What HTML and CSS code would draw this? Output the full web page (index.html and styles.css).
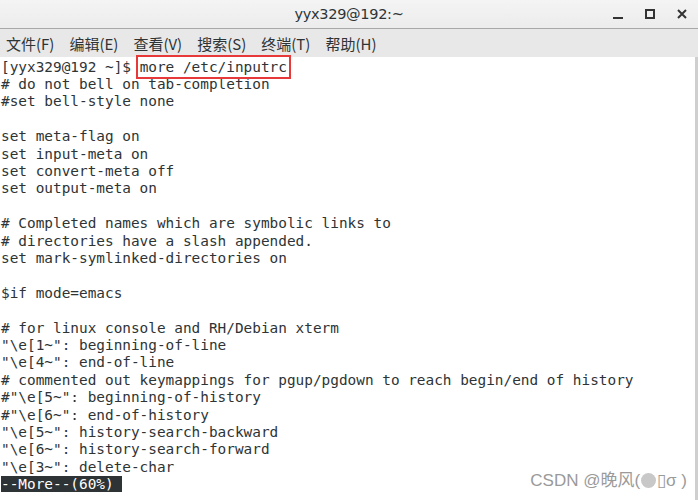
FILE: index.html
```html
<!DOCTYPE html>
<html lang="zh-CN">
<head>
    <meta charset="UTF-8">
    <title>yyx329@192:~</title>
    <link rel="stylesheet" href="styles.css">
</head>
<body>
    <div class="window">
        <div class="titlebar">
            <span class="title">yyx329@192:~</span>
            <div class="controls">
                <svg width="12" height="12" viewBox="0 0 12 12"><rect x="1" y="9" width="10" height="2" fill="#333"/></svg>
                <svg width="12" height="12" viewBox="0 0 12 12"><rect x="2" y="2" width="8" height="8" fill="none" stroke="#333" stroke-width="2"/></svg>
                <svg width="12" height="12" viewBox="0 0 12 12"><path d="M2 2 L10 10 M10 2 L2 10" stroke="#333" stroke-width="2"/></svg>
            </div>
        </div>
        <div class="menubar">
            <span>文件(F)</span>
            <span>编辑(E)</span>
            <span>查看(V)</span>
            <span>搜索(S)</span>
            <span>终端(T)</span>
            <span>帮助(H)</span>
        </div>
        <div class="terminal">
<pre class="output">[yyx329@192 ~]$ <span class="cmd">more /etc/inputrc</span>
# do not bell on tab-completion
#set bell-style none

set meta-flag on
set input-meta on
set convert-meta off
set output-meta on

# Completed names which are symbolic links to
# directories have a slash appended.
set mark-symlinked-directories on

$if mode=emacs

# for linux console and RH/Debian xterm
"\e[1~": beginning-of-line
"\e[4~": end-of-line
# commented out keymappings for pgup/pgdown to reach begin/end of history
#"\e[5~": beginning-of-history
#"\e[6~": end-of-history
"\e[5~": history-search-backward
"\e[6~": history-search-forward
"\e[3~": delete-char
<span class="more">--More--(60%) </span></pre>
            <div class="watermark">CSDN @晚风(<span class="dot"></span>▯σ )</div>
        </div>
    </div>
</body>
</html>
```

FILE: styles.css
```css
body {
    margin: 0;
    padding: 0;
    background-color: #ffffff;
    font-family: "Noto Sans CJK SC", "DejaVu Sans", sans-serif;
    overflow: hidden;
}

.window {
    width: 698px;
    height: 500px;
    display: flex;
    flex-direction: column;
}

.titlebar {
    height: 28px;
    background: linear-gradient(#f4f4f4, #ececec);
    border-bottom: 1px solid #a8a8a8;
    position: relative;
    display: flex;
    align-items: center;
    justify-content: center;
    flex-shrink: 0;
}

.title {
    font-family: "DejaVu Sans", sans-serif;
    font-size: 14.5px;
    color: #2e3436;
    letter-spacing: -0.3px;
}

.controls {
    position: absolute;
    right: 10px;
    top: 8px;
    display: flex;
    gap: 20px;
}

.menubar {
    height: 28px;
    background-color: #e8e8e8;
    display: flex;
    align-items: center;
    padding-left: 6px;
    gap: 15px;
    font-size: 15px;
    color: #2e3436;
    flex-shrink: 0;
}

.terminal {
    flex: 1;
    position: relative;
    border-right: 3px solid #cfcfcf;
    background-color: #ffffff;
}

.output {
    margin: 0;
    padding: 1.5px 0 0 1px;
    font-family: "DejaVu Sans Mono", monospace;
    font-size: 14.4px;
    line-height: 17.4px;
    color: #2e3436;
}

.cmd {
    outline: 2px solid #e8393a;
    outline-offset: 2px;
}

.more {
    background-color: #2e3436;
    color: #ffffff;
}

.watermark {
    position: absolute;
    right: 8px;
    bottom: 9px;
    font-family: "Liberation Sans", "Noto Sans CJK SC", sans-serif;
    font-size: 17px;
    color: #9a9a9a;
}

.dot {
    display: inline-block;
    width: 15px;
    height: 15px;
    border-radius: 50%;
    background-color: #c8c8c8;
    margin: 0 1px;
    vertical-align: -2px;
}
```
